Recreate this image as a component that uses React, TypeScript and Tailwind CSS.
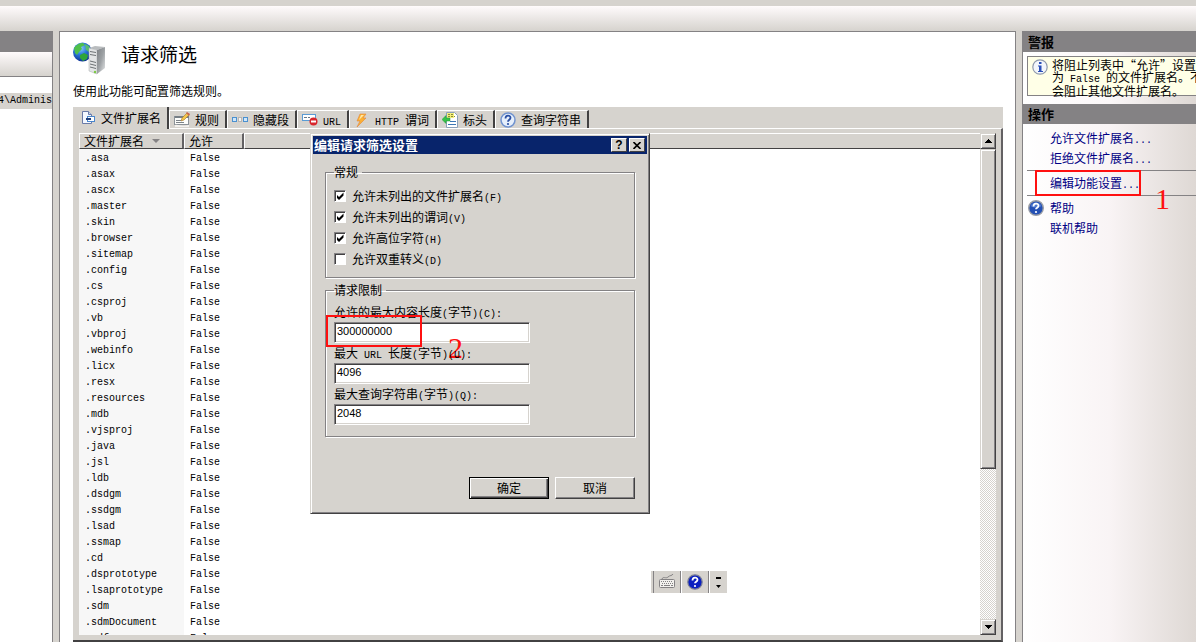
import { ReactNode } from 'react'

const EXTENSIONS = [
  '.asa', '.asax', '.ascx', '.master', '.skin', '.browser', '.sitemap', '.config',
  '.cs', '.csproj', '.vb', '.vbproj', '.webinfo', '.licx', '.resx', '.resources',
  '.mdb', '.vjsproj', '.java', '.jsl', '.ldb', '.dsdgm', '.ssdgm', '.lsad', '.ssmap',
  '.cd', '.dsprototype', '.lsaprototype', '.sdm', '.sdmDocument', '.mdf',
]

const CHECKS = [
  { id: 'ext', label: '允许未列出的文件扩展名(F)', on: true },
  { id: 'verb', label: '允许未列出的谓词(V)', on: true },
  { id: 'high', label: '允许高位字符(H)', on: true },
  { id: 'double', label: '允许双重转义(D)', on: false },
]

const LIMITS = [
  { id: 'content', label: '允许的最大内容长度(字节)(C):', value: '300000000' },
  { id: 'url', label: '最大 URL 长度(字节)(U):', value: '4096' },
  { id: 'query', label: '最大查询字符串(字节)(Q):', value: '2048' },
]

// Latin runs are half the width of a Chinese character
function Mixed({ children }: { children: string }) {
  return (
    <>
      {children.split(/([ -~]+)/).filter(Boolean).map((part, i) =>
        /^[ -~]/.test(part)
          ? <span key={i} className="whitespace-pre font-['Liberation_Mono',monospace] text-[10px] leading-none">{part}</span>
          : part
      )}
    </>
  )
}

/* ── Icons ── */

function ServerIcon() {
  return (
    <svg width="34" height="34" viewBox="0 0 34 34" className="shrink-0">
      <defs>
        <radialGradient id="globe" cx="0.4" cy="0.3" r="0.75">
          <stop offset="0" stopColor="#8fd0fa" />
          <stop offset="0.45" stopColor="#2a78dc" />
          <stop offset="1" stopColor="#0b2a8c" />
        </radialGradient>
        <linearGradient id="tower" x1="0" y1="0" x2="1" y2="1">
          <stop offset="0" stopColor="#7c8084" />
          <stop offset="0.5" stopColor="#9da1a4" />
          <stop offset="1" stopColor="#e6e8e9" />
        </linearGradient>
      </defs>
      <circle cx="9.500" cy="10" r="9.500" fill="url(#globe)" />
      <path d="M1 6c3-4 6-5 9-5l2 2-4 2 1 2-3 3-2 3-2-2z" fill="#4fc04a" />
      <path d="M7 13l4-2 4 2-1 4-4 2-3-3z" fill="#2fa53a" />
      <path d="M12 2l4 2 2 4-2 2-3-2z" fill="#63cf55" opacity="0.8" />
      <path d="M16 6l6-2 10 1-8 3z" fill="#b9bcbe" />
      <path d="M16 6l8 2v24l-8-3z" fill="#e3e5e6" stroke="#a5a8aa" strokeWidth="0.5" />
      <path d="M24 8l8-3v21l-8 6z" fill="url(#tower)" />
      <path d="M17 9.500l6 1M17 12.500l6 1M17 19l6 1.500M17 22l6 1.500M17 25l6 1.500" stroke="#6d7174" />
      <circle cx="22" cy="30" r="1.200" fill="#7ac943" />
    </svg>
  )
}

function ExtensionIcon() {
  return (
    <svg width="16" height="16" viewBox="0 0 16 16" className="shrink-0">
      <path d="M1.500 1.500h6l3 3v9h-9z" fill="#f4f8ff" stroke="#6a7ba8" />
      <path d="M7.500 1.500v3h3" fill="#c8d6ee" stroke="#6a7ba8" />
      <rect x="6.500" y="6.500" width="7" height="5" fill="#fff" stroke="#4a86cc" />
      <path d="M5 9h5" stroke="#20407c" strokeWidth="2" />
    </svg>
  )
}

function RulesIcon() {
  return (
    <svg width="16" height="16" viewBox="0 0 16 16" className="shrink-0">
      <rect x="0.500" y="4.500" width="14" height="8" fill="#fdfdfb" stroke="#8b9298" />
      <path d="M1 5h14" stroke="#777f86" strokeWidth="2" />
      <path d="M2 8.500h5M2 10.500h8" stroke="#7d848a" />
      <path d="M1 13c3-1 6 2 14 0v2H1z" fill="#f3f1ee" />
      <path d="M7 9l1-3 5-5 2 2-5 5z" fill="#f4c64d" stroke="#a2772c" strokeWidth="0.6" />
      <path d="M12 1l1-1 3 2-1 2z" fill="#c7654a" />
    </svg>
  )
}

function HiddenIcon() {
  return (
    <svg width="16" height="16" viewBox="0 0 16 16" className="shrink-0">
      <rect x="0.500" y="5.500" width="4" height="4" fill="#cfe6fa" stroke="#4a90cf" />
      <rect x="6.500" y="5.500" width="3" height="4" fill="#f4f4f4" stroke="#8a8a8a" strokeDasharray="1 1" />
      <rect x="11.500" y="5.500" width="4" height="4" fill="#cfe6fa" stroke="#4a90cf" />
    </svg>
  )
}

function UrlIcon() {
  return (
    <svg width="16" height="16" viewBox="0 0 16 16" className="shrink-0">
      <rect x="0.500" y="2.500" width="13" height="6" fill="#fff" stroke="#5a9bd5" />
      <path d="M2 5.500h3M6 5.500h2" stroke="#64778a" />
      <circle cx="11.500" cy="9.500" r="4" fill="#d8262c" />
      <path d="M9 9.500h5" stroke="#fff" strokeWidth="2" />
    </svg>
  )
}

function BoltIcon() {
  return (
    <svg width="16" height="16" viewBox="0 0 16 16" className="shrink-0">
      <path d="M6 2h6L9 6h3l-9 9 3-6H3z" fill="#fbb034" stroke="#e2873a" strokeWidth="0.6" />
      <path d="M7 3h3L5 8z" fill="#ffe9a6" />
    </svg>
  )
}

function HeaderIcon() {
  return (
    <svg width="16" height="16" viewBox="0 0 16 16" className="shrink-0">
      <path d="M4.500 0.500h8l3 3v12h-11z" fill="#fff" stroke="#8ba0b8" />
      <path d="M5 1h7v5H5z" fill="#f3ee7a" />
      <path d="M6 2.500h5M6 4.500h7" stroke="#8a8a3a" strokeDasharray="2 1" />
      <path d="M8 9.500h6M6 12.500h8" stroke="#3d78b4" />
      <path d="M0 7.500l4-4V6h4v3H4v2.500z" fill="#37c24a" stroke="#1f9a32" strokeWidth="0.5" />
    </svg>
  )
}

function QueryIcon() {
  return (
    <svg width="16" height="16" viewBox="0 0 16 16" className="shrink-0">
      <circle cx="8" cy="8" r="7" fill="#e6effb" stroke="#7193cf" strokeWidth="1.500" />
      <path d="M5.500 6.500c0-4 5-3.500 5-.8 0 2-2.500 2-2.500 4" fill="none" stroke="#2a4fa3" strokeWidth="1.800" />
      <circle cx="8" cy="12" r="1.100" fill="#2a4fa3" />
    </svg>
  )
}

function HelpIcon() {
  return (
    <svg width="16" height="16" viewBox="0 0 16 16" className="shrink-0">
      <circle cx="8" cy="8" r="7.300" fill="#2450b4" stroke="#9a9ea6" strokeWidth="1.400" />
      <path d="M2.500 6a6 6 0 0 1 11 0c-3 2-8 2-11 0z" fill="#6d95e0" opacity="0.6" />
      <path d="M5.500 6.500c0-4 5-3.500 5-.8 0 2-2.500 2-2.500 3.600" fill="none" stroke="#fff" strokeWidth="1.800" />
      <circle cx="8" cy="12" r="1.100" fill="#fff" />
    </svg>
  )
}

function InfoIcon() {
  return (
    <svg width="16" height="16" viewBox="0 0 16 16" className="shrink-0">
      <circle cx="8" cy="8" r="7.200" fill="#f3f6fb" stroke="#8f9aac" strokeWidth="1.200" />
      <rect x="7" y="3" width="2.500" height="2" fill="#2b50b8" />
      <path d="M6 6.500h3.500V12H11v1H6v-1h1V7.500H6z" fill="#2b50b8" />
    </svg>
  )
}

function KeyboardIcon() {
  return (
    <svg width="16" height="16" viewBox="0 0 16 16" className="shrink-0">
      <path d="M3 5c1-3 4 0 6-2s4-1 5-3" fill="none" stroke="#848284" />
      <rect x="0.500" y="5.500" width="15" height="8" rx="1" fill="#f2f1ee" stroke="#848284" />
      <path d="M2 7.500h12M3 9.500h11" stroke="#848284" strokeDasharray="1 1" />
      <path d="M2 11.500h2M5 11.500h6M12 11.500h2" stroke="#848284" />
    </svg>
  )
}

const TABS: { label: string; icon: ReactNode }[] = [
  { label: '规则', icon: <RulesIcon /> },
  { label: '隐藏段', icon: <HiddenIcon /> },
  { label: 'URL', icon: <UrlIcon /> },
  { label: 'HTTP 谓词', icon: <BoltIcon /> },
  { label: '标头', icon: <HeaderIcon /> },
  { label: '查询字符串', icon: <QueryIcon /> },
]

function ScrollButton({ down }: { down?: boolean }) {
  return (
    <button
      aria-label={down ? '向下滚动' : '向上滚动'}
      className="flex h-4 w-4 shrink-0 items-center justify-center border border-t-[#d6d3ce] border-r-[#424142] border-b-[#424142] border-l-[#d6d3ce] bg-[#d6d3ce] shadow-[inset_1px_1px_0_#fff,inset_-1px_-1px_0_#848284]"
    >
      <svg width="7" height="4" viewBox="0 0 7 4" shapeRendering="crispEdges">
        <path d={down ? 'M0 0h7L3.500 4z' : 'M0 4h7L3.500 0z'} fill="#000" />
      </svg>
    </button>
  )
}

function FilterList() {
  return (
    <div className="flex min-h-0 flex-1 bg-white">
      <div className="min-w-0 flex-1 overflow-hidden">
        <table className="w-full table-fixed border-separate border-spacing-0 text-left">
          <colgroup>
            <col className="w-[105px]" />
            <col className="w-[60px]" />
            <col />
          </colgroup>
          <thead>
            <tr className="h-4 bg-[#d6d3ce] leading-[14px]">
              <th className="border-t border-r-2 border-b border-l border-t-white border-r-[#636163] border-b-[#424142] border-l-white p-0 pl-1 font-normal">
                <span className="flex items-center gap-2">
                  文件扩展名
                  <svg width="8" height="4" viewBox="0 0 8 4"><path d="M0 0h8L4 4z" fill="#848284" /></svg>
                </span>
              </th>
              <th className="border-t border-r-2 border-b border-l border-t-white border-r-[#636163] border-b-[#424142] border-l-white p-0 pl-1 font-normal">允许</th>
              <th className="border-t border-b border-l border-t-white border-b-[#424142] border-l-white p-0" />
            </tr>
          </thead>
          <tbody className="font-['Liberation_Mono',monospace] text-[10px] leading-3">
            {EXTENSIONS.map(ext => (
              <tr key={ext} className="h-4 align-bottom">
                <td className="bg-[#f7f7f7] p-0 pl-1.5">{ext}</td>
                <td className="p-0 pl-1.5">False</td>
                <td className="p-0" />
              </tr>
            ))}
          </tbody>
        </table>
      </div>

      {/* Scroll bar */}
      <div className="flex w-4 shrink-0 flex-col bg-[repeating-conic-gradient(#d6d3ce_0_25%,#fff_0_50%)] bg-[length:2px_2px]">
        <ScrollButton />
        <div className="h-[320px] border border-t-[#d6d3ce] border-r-[#424142] border-b-[#424142] border-l-[#d6d3ce] bg-[#d6d3ce] shadow-[inset_1px_1px_0_#fff,inset_-1px_-1px_0_#848284]" />
        <div className="flex-1" />
        <ScrollButton down />
      </div>
    </div>
  )
}

function SettingsDialog() {
  return (
    <div
      role="dialog"
      aria-labelledby="dialog-title"
      className="absolute top-[133px] left-[310px] w-[340px] border border-t-[#d6d3ce] border-r-[#424142] border-b-[#424142] border-l-[#d6d3ce] bg-[#d6d3ce] p-0.5 shadow-[inset_1px_1px_0_#fff,inset_-1px_-1px_0_#848284]"
    >
      <div className="flex h-[18px] items-center gap-0.5 bg-[#08246b] pr-0.5 pl-px">
        <h2 id="dialog-title" className="flex-1 text-[13px] leading-4 font-bold text-white">编辑请求筛选设置</h2>
        <button aria-label="帮助" className="flex h-3.5 w-4 items-center justify-center border border-t-white border-r-[#424142] border-b-[#424142] border-l-white bg-[#d6d3ce] font-['Liberation_Sans',sans-serif] text-xs font-bold">?</button>
        <button aria-label="关闭" className="flex h-3.5 w-4 items-center justify-center border border-t-white border-r-[#424142] border-b-[#424142] border-l-white bg-[#d6d3ce]">
          <svg width="8" height="7" viewBox="0 0 8 7"><path d="M0.500 0l7 7M7.500 0l-7 7" stroke="#000" strokeWidth="1.600" /></svg>
        </button>
      </div>

      <div className="px-3 pt-3 pb-3">
        <fieldset className="border border-[#848284] px-2 pb-2.5 shadow-[inset_1px_1px_0_#fff,1px_1px_0_#fff]">
          <legend className="pr-1 leading-3">常规</legend>
          <div className="flex flex-col gap-[5px] pt-2.5">
            {CHECKS.map(c => (
              <label key={c.id} htmlFor={c.id} className="flex items-center gap-1.5 leading-4">
                <span className="grid h-3 w-3">
                  <input
                    id={c.id}
                    type="checkbox"
                    defaultChecked={c.on}
                    className="peer col-start-1 row-start-1 h-3 w-3 appearance-none border border-t-[#848284] border-r-white border-b-white border-l-[#848284] bg-white shadow-[inset_1px_1px_0_#424142]"
                  />
                  <svg width="12" height="12" viewBox="0 0 12 12" className="pointer-events-none invisible col-start-1 row-start-1 peer-checked:visible">
                    <path d="M3 5v3l2 2 4.500-4.500v-3L5 7z" fill="#000" />
                  </svg>
                </span>
                <span><Mixed>{c.label}</Mixed></span>
              </label>
            ))}
          </div>
        </fieldset>

        <fieldset className="mt-1.5 border border-[#848284] px-2 pb-[11px] shadow-[inset_1px_1px_0_#fff,1px_1px_0_#fff]">
          <legend className="pr-1 leading-3">请求限制</legend>
          <div className="flex flex-col gap-0.5 pt-2">
            {LIMITS.map(l => (
              <div key={l.id} className="relative flex flex-col gap-0.5">
                <label htmlFor={l.id} className="leading-4"><Mixed>{l.label}</Mixed></label>
                <input
                  id={l.id}
                  type="text"
                  defaultValue={l.value}
                  className="h-[21px] w-[196px] border border-t-[#848284] border-r-white border-b-white border-l-[#848284] bg-white pb-1 pl-0.5 font-['Liberation_Sans',sans-serif] text-[11px] leading-4 shadow-[inset_1px_1px_0_#424142,inset_-1px_-1px_0_#d6d3ce]"
                />
                {l.id === 'content' && (
                  <>
                    <span className="absolute -bottom-1 -left-2 h-8 w-24 border-2 border-[#ff1010]" />
                    <span className="absolute top-7 left-[114px] font-['Liberation_Serif',serif] text-[30px] leading-8 text-[#ff1010]">2</span>
                  </>
                )}
              </div>
            ))}
          </div>
        </fieldset>

        <div className="mt-10 flex justify-end gap-1.5">
          <button className="h-[22px] w-20 border border-black bg-[#d6d3ce] leading-4 shadow-[inset_1px_1px_0_#fff,inset_-1px_-1px_0_#424142,inset_-2px_-2px_0_#848284]">确定</button>
          <button className="h-[22px] w-20 border border-t-white border-r-[#424142] border-b-[#424142] border-l-white bg-[#d6d3ce] leading-4 shadow-[inset_-1px_-1px_0_#848284]">取消</button>
        </div>
      </div>
    </div>
  )
}

function ActionsPanel() {
  return (
    <aside className="flex w-[174px] shrink-0 flex-col overflow-hidden border-t border-l border-[#848284] bg-white">
      <h2 className="h-5 bg-[#848284] pl-[5px] text-[13px] leading-5 font-bold">警报</h2>
      <div className="bg-linear-to-r from-white via-[#fbf7f8] to-[#ded8d4] pt-1 pb-2 pl-1">
        <div className="flex h-10 gap-1 border border-r-0 border-[#848284] bg-[#ffffe7] pt-0.5 pl-1">
          <InfoIcon />
          <p className="leading-3 whitespace-nowrap">
            <Mixed>将阻止列表中“允许”设置</Mixed><br />
            <Mixed>为 False 的文件扩展名。不</Mixed><br />
            <Mixed>会阻止其他文件扩展名。</Mixed>
          </p>
        </div>
      </div>
      <h2 className="h-5 bg-[#848284] pl-[5px] text-[13px] leading-5 font-bold">操作</h2>
      <nav className="flex-1 bg-linear-to-r from-white via-[#f9f4f5] to-[#ded8d4] pt-1 pl-1 leading-5 text-[#000084]">
        <a href="#allow" className="block pl-[23px]"><Mixed>允许文件扩展名...</Mixed></a>
        <a href="#deny" className="block pl-[23px]"><Mixed>拒绝文件扩展名...</Mixed></a>
        <div className="relative my-0.5 border-y border-[#848284] py-0.5">
          <a href="#edit" className="block pl-[23px]"><Mixed>编辑功能设置...</Mixed></a>
          <span className="absolute -inset-y-px left-2 w-[106px] border-2 border-[#ff1010]" />
          <span className="absolute top-3 left-32 font-['Liberation_Serif',serif] text-[30px] leading-8 text-[#ff1010]">1</span>
        </div>
        <a href="#help" className="flex items-center gap-1.5 pl-px"><HelpIcon />帮助</a>
        <a href="#online" className="block pl-[23px]">联机帮助</a>
      </nav>
    </aside>
  )
}

export default function App() {
  return (
    <div lang="zh-CN" className="relative flex h-screen flex-col overflow-hidden bg-[#d6d3ce] pt-1.5 font-['Noto_Sans_CJK_SC',sans-serif] text-xs text-black">
      <div className="h-[25px] shrink-0 bg-linear-to-b from-[#fffbfc] to-[#d6d3ce]" />

      <div className="flex min-h-0 flex-1 gap-1.5">
        {/* Connections pane, mostly scrolled out of view */}
        <aside className="w-[53px] shrink-0 overflow-hidden border-t border-r border-[#848284] bg-white">
          <div className="h-5 bg-[#848284]" />
          <div className="h-[25px] border-b border-[#848284] bg-linear-to-b from-[#fffbfc] to-[#d6d3ce]" />
          <div className="mt-4 flex h-4 justify-end bg-[#d6d3ce] font-['Liberation_Mono',monospace] text-[10px] leading-4">4\Adminis</div>
        </aside>

        <main className="flex min-w-0 flex-1 flex-col border border-b-0 border-[#848284] bg-white pr-3 pl-[13px]">
          <header className="flex gap-3.5 pt-2.5">
            <ServerIcon />
            <h1 className="text-[19px] leading-6">请求筛选</h1>
          </header>
          <p className="mt-[7px] pb-2 leading-4">使用此功能可配置筛选规则。</p>

          <div className="flex h-[21px] shrink-0 items-end bg-[#d6d3ce]">
            <button className="relative -mb-px flex h-[22px] items-center gap-1 border-r-2 border-[#424142] bg-[#d6d3ce] pr-1.5 pl-2 leading-4">
              <ExtensionIcon />文件扩展名
            </button>
            {TABS.map(t => (
              <button key={t.label} className="flex h-[18px] items-center gap-[5px] border-t border-r-2 border-l border-t-white border-r-[#424142] border-l-white pr-1.5 pl-1 leading-4">
                {t.icon}
                <span><Mixed>{t.label}</Mixed></span>
              </button>
            ))}
          </div>
          <div className="flex min-h-0 flex-1 flex-col border-t border-r-2 border-b-2 border-t-white border-r-[#636163] border-b-[#424142] bg-[#d6d3ce] pt-1 pr-[5px] pb-[5px] pl-1.5">
            <FilterList />
          </div>
        </main>

        <ActionsPanel />
      </div>

      <SettingsDialog />

      {/* Language bar */}
      <div className="absolute top-[571px] left-[651px] flex h-[22px] border-l border-[#d6d3ce] bg-[#d6d3ce] pl-px">
        <button aria-label="键盘" className="flex w-7 items-center justify-center border-r border-l border-r-[#848284] border-l-[#848284]"><KeyboardIcon /></button>
        <button aria-label="帮助" className="flex w-7 items-center justify-center border-r border-l border-r-[#848284] border-l-white">
          <svg width="16" height="16" viewBox="0 0 16 16">
            <circle cx="8" cy="8" r="7.200" fill="#0a1fc0" stroke="#7b7f94" strokeWidth="1.200" />
            <path d="M5.500 6.500c0-4 5-3.500 5-.8 0 2-2.500 2-2.500 3.600" fill="none" stroke="#fff" strokeWidth="1.800" />
            <circle cx="8" cy="12" r="1.100" fill="#fff" />
          </svg>
        </button>
        <button aria-label="选项" className="flex w-[18px] flex-col items-center justify-center border-l border-white">
          <svg width="5" height="11" viewBox="0 0 5 11"><path d="M0 0h5v2H0zM0 8h5L2.500 11z" fill="#000" /></svg>
        </button>
      </div>
    </div>
  )
}
